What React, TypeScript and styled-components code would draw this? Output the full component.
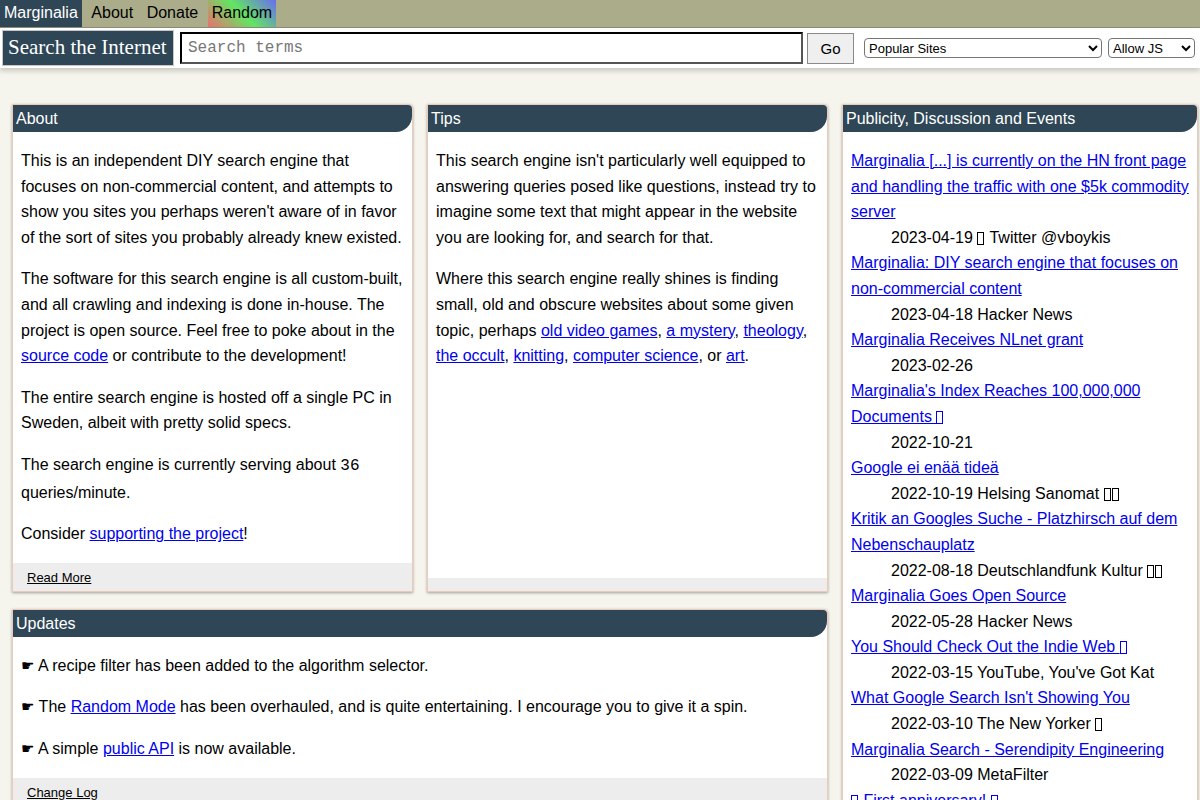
import React from "react";
import styled, { createGlobalStyle } from "styled-components";

const Global = createGlobalStyle`
  html, body { margin: 0; padding: 0; }
  body {
    background: #f5f5ed;
    font-family: "Liberation Sans", Arial, sans-serif;
    font-size: 16px;
    color: #000;
  }
  a { color: #0000ee; }
`;

const TopNav = styled.nav`
  display: flex;
  gap: 5.5px;
  background: #abad8a;
  border-bottom: 1px solid #8d8f78;
  height: 27px;
`;

const NavItem = styled.a<{ $variant?: "brand" | "rainbow" }>`
  display: block;
  padding: 3px 4px 5px;
  line-height: 19px;
  text-decoration: none;
  color: ${(p) => (p.$variant === "brand" ? "#fff" : "#000")};
  background: ${(p) =>
    p.$variant === "brand"
      ? "#2e4656"
      : p.$variant === "rainbow"
      ? "linear-gradient(45deg, #ec6f6f 0%, #62e662 50%, #6a6cf0 100%)"
      : "transparent"};
`;

const SearchBar = styled.form`
  display: flex;
  align-items: center;
  background: #fff;
  padding: 2px;
  height: 36px;
  box-shadow: 0 3px 5px rgba(0, 0, 0, 0.18);
  position: relative;
`;

const SearchLabel = styled.h1`
  margin: 0;
  box-sizing: border-box;
  height: 36px;
  background: #2e4656;
  color: #fff;
  border: 1px solid #c8c8c8;
  font-family: "Liberation Serif", "Times New Roman", serif;
  font-weight: normal;
  font-size: 21px;
  line-height: 32px;
  padding: 0 5px 0 5px;
  width: 172px;
  white-space: nowrap;
`;

const QueryInput = styled.input`
  box-sizing: border-box;
  margin-left: 6px;
  width: 623px;
  height: 32px;
  border: 2px solid #000;
  border-right-color: #555;
  border-bottom-color: #555;
  padding: 0 6px;
  font-family: "Liberation Mono", "Courier New", monospace;
  font-size: 16px;
  outline: none;
  &::placeholder { color: #777; }
`;

const GoButton = styled.button`
  box-sizing: border-box;
  margin-left: 4px;
  width: 47px;
  height: 31px;
  background: #efefef;
  border: 1px solid #8a8a8a;
  font-family: "Liberation Sans", Arial, sans-serif;
  font-size: 15px;
  color: #000;
  padding: 0;
`;

const Picker = styled.select<{ $w: number; $ml: number }>`
  box-sizing: border-box;
  width: ${(p) => p.$w}px;
  margin-left: ${(p) => p.$ml}px;
  height: 20px;
  font-family: "Liberation Sans", Arial, sans-serif;
  font-size: 13px;
  border: 1px solid #767676;
  border-radius: 4px;
  background: #fff;
  color: #000;
`;

const Main = styled.main`
  display: grid;
  grid-template-columns: 401px 401px 356px;
  grid-template-rows: auto 1fr;
  column-gap: 14px;
  row-gap: 17px;
  padding: 36px 0 0 12px;
`;

const Card = styled.section<{ $span?: string; $rows?: string; $start?: boolean }>`
  display: flex;
  flex-direction: column;
  background: #fff;
  box-sizing: border-box;
  border: 1px solid #ecc9b8;
  box-shadow: 0 1px 3px rgba(0, 0, 0, 0.35);
  border-radius: 0 4px 0 0;
  grid-column: ${(p) => p.$span || "auto"};
  grid-row: ${(p) => p.$rows || "auto"};
  align-self: ${(p) => (p.$start ? "start" : "stretch")};
`;

const CardHeader = styled.h2`
  margin: 0;
  background: #2e4656;
  color: #fff;
  font-size: 16px;
  font-weight: normal;
  line-height: 19px;
  padding: 4px 3px;
  border-radius: 0 4px 16px 0;
`;

const CardBody = styled.div`
  flex: 1;
  padding: 0 8px;
  line-height: 25.6px;
  & p { margin: 16px 0; }
`;

const Mono = styled.span`
  font-family: "Liberation Mono", "Courier New", monospace;
`;

const CardFooter = styled.div`
  background: #ededed;
  padding: 7px 14px 6px;
  font-size: 13px;
  line-height: 15px;
  & a { color: #000; }
`;

const EventList = styled.dl`
  margin: 16px 0;
  & dd { margin: 0 0 0 40px; }
  & dt { margin: 0; }
`;

const Hand = styled.span`
  font-family: "DejaVu Sans", sans-serif;
  font-size: 15px;
  line-height: 1;
`;

/* Emoji shown as the "missing glyph" box, as in the reference rendering */
const Tofu = styled.span`
  display: inline-block;
  box-sizing: border-box;
  width: 7px;
  height: 13px;
  margin: 0 1px 0 0;
  border: 1px solid currentColor;
  vertical-align: -2px;
  overflow: hidden;
  font-size: 1px;
  line-height: 1px;
  color: inherit;
  & > span { color: transparent; }
`;

const E = ({ c }: { c: string }) => (
  <>
    {Array.from(c).map((ch, i) => (
      <Tofu key={i}>
        <span>{ch}</span>
      </Tofu>
    ))}
  </>
);

type Ev = { title: React.ReactNode; meta: React.ReactNode; key: string };

const events: Ev[] = [
  {
    key: "a",
    title:
      "Marginalia [...] is currently on the HN front page and handling the traffic with one $5k commodity server",
    meta: (
      <>
        2023-04-19 <E c={"\u{1F426}"} /> Twitter @vboykis
      </>
    ),
  },
  {
    key: "b",
    title: "Marginalia: DIY search engine that focuses on non-commercial content",
    meta: "2023-04-18 Hacker News",
  },
  { key: "c", title: "Marginalia Receives NLnet grant", meta: "2023-02-26" },
  {
    key: "d",
    title: (
      <>
        Marginalia's Index Reaches 100,000,000 Documents <E c={"\u{1F389}"} />
      </>
    ),
    meta: "2022-10-21",
  },
  {
    key: "e",
    title: "Google ei enää tideä",
    meta: (
      <>
        2022-10-19 Helsing Sanomat <E c={"\u{1F1EB}\u{1F1EE}"} />
      </>
    ),
  },
  {
    key: "f",
    title: "Kritik an Googles Suche - Platzhirsch auf dem Nebenschauplatz",
    meta: (
      <>
        2022-08-18 Deutschlandfunk Kultur <E c={"\u{1F1E9}\u{1F1EA}"} />
      </>
    ),
  },
  { key: "g", title: "Marginalia Goes Open Source", meta: "2022-05-28 Hacker News" },
  {
    key: "h",
    title: (
      <>
        You Should Check Out the Indie Web <E c={"\u{1F39E}"} />
      </>
    ),
    meta: "2022-03-15 YouTube, You've Got Kat",
  },
  {
    key: "i",
    title: "What Google Search Isn't Showing You",
    meta: (
      <>
        2022-03-10 The New Yorker <E c={"\u{1F3A9}"} />
      </>
    ),
  },
  {
    key: "j",
    title: "Marginalia Search - Serendipity Engineering",
    meta: "2022-03-09 MetaFilter",
  },
  {
    key: "k",
    title: (
      <>
        <E c={"\u{1F382}"} /> First anniversary! <E c={"\u{1F382}"} />
      </>
    ),
    meta: "2022-02-26",
  },
];

export default function App() {
  return (
    <>
      <Global />
      <header>
        <TopNav>
          <NavItem href="#" $variant="brand">Marginalia</NavItem>
          <NavItem href="#">About</NavItem>
          <NavItem href="#">Donate</NavItem>
          <NavItem href="#" $variant="rainbow">Random</NavItem>
        </TopNav>
        <SearchBar onSubmit={(e) => e.preventDefault()}>
          <SearchLabel>Search the Internet</SearchLabel>
          <QueryInput placeholder="Search terms" />
          <GoButton type="submit">Go</GoButton>
          <Picker $w={238} $ml={10} defaultValue="popular">
            <option value="popular">Popular Sites</option>
            <option value="blogs">Blogs and Personal Websites</option>
          </Picker>
          <Picker $w={87} $ml={6} defaultValue="js">
            <option value="js">Allow JS</option>
            <option value="nojs">Deny JS</option>
          </Picker>
        </SearchBar>
      </header>
      <Main>
        <Card>
          <CardHeader>About</CardHeader>
          <CardBody>
            <p>
              This is an independent DIY search engine that focuses on non-commercial content, and
              attempts to show you sites you perhaps weren't aware of in favor of the sort of sites
              you probably already knew existed.
            </p>
            <p>
              The software for this search engine is all custom-built, and all crawling and indexing
              is done in-house. The project is open source. Feel free to poke about in the{" "}
              <a href="#">source code</a> or contribute to the development!
            </p>
            <p>
              The entire search engine is hosted off a single PC in Sweden, albeit with pretty solid
              specs.
            </p>
            <p>
              The search engine is currently serving about <Mono>36</Mono> queries/minute.
            </p>
            <p>
              Consider <a href="#">supporting the project</a>!
            </p>
          </CardBody>
          <CardFooter>
            <a href="#">Read More</a>
          </CardFooter>
        </Card>
        <Card>
          <CardHeader>Tips</CardHeader>
          <CardBody>
            <p>
              This search engine isn't particularly well equipped to answering queries posed like
              questions, instead try to imagine some text that might appear in the website you are
              looking for, and search for that.
            </p>
            <p>
              Where this search engine really shines is finding small, old and obscure websites about
              some given topic, perhaps <a href="#">old video games</a>, <a href="#">a mystery</a>,{" "}
              <a href="#">theology</a>, <a href="#">the occult</a>, <a href="#">knitting</a>,{" "}
              <a href="#">computer science</a>, or <a href="#">art</a>.
            </p>
          </CardBody>
          <CardFooter />
        </Card>
        <Card $rows="1 / span 2" $span="3">
          <CardHeader>Publicity, Discussion and Events</CardHeader>
          <CardBody>
            <EventList>
              {events.map((ev) => (
                <React.Fragment key={ev.key}>
                  <dt>
                    <a href="#">{ev.title}</a>
                  </dt>
                  <dd>{ev.meta}</dd>
                </React.Fragment>
              ))}
            </EventList>
          </CardBody>
        </Card>
        <Card $span="1 / 3" $start>
          <CardHeader>Updates</CardHeader>
          <CardBody>
            <p>
              <Hand>☛</Hand> A recipe filter has been added to the algorithm selector.
            </p>
            <p>
              <Hand>☛</Hand> The <a href="#">Random Mode</a> has been overhauled, and is quite
              entertaining. I encourage you to give it a spin.
            </p>
            <p>
              <Hand>☛</Hand> A simple <a href="#">public API</a> is now available.
            </p>
          </CardBody>
          <CardFooter>
            <a href="#">Change Log</a>
          </CardFooter>
        </Card>
      </Main>
    </>
  );
}
